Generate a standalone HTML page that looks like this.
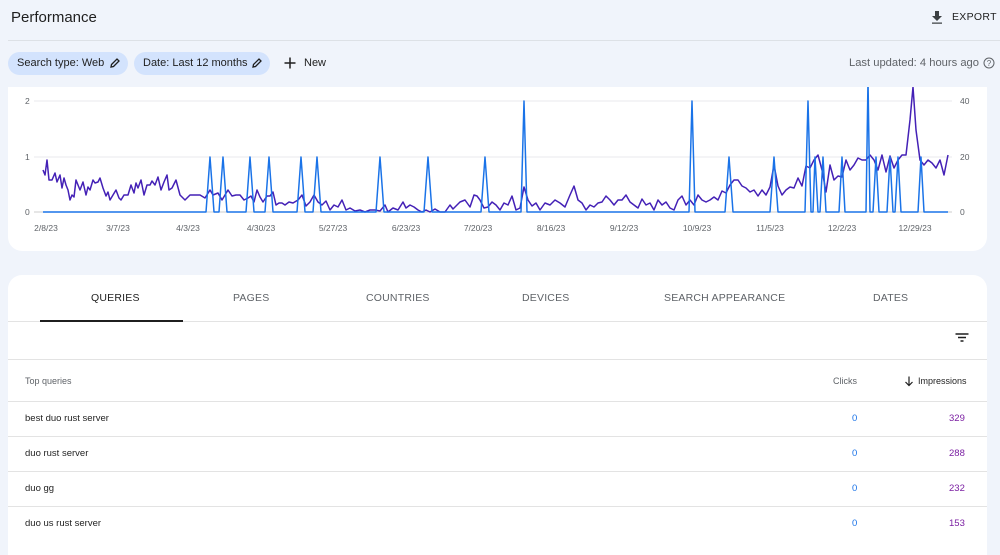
<!DOCTYPE html>
<html><head><meta charset="utf-8"><style>
body{margin:0;width:1000px;height:542px;background:#f0f4fb;font-family:"Liberation Sans",Arial,sans-serif;position:relative;overflow:hidden;color:#1f1f1f}
.a{position:absolute}
.chip{position:absolute;top:52px;height:23px;box-sizing:border-box;border-radius:12px;background:#d3e3fd;font-size:11px;line-height:23px;padding-left:9px;color:#1f1f1f}
.tab{position:absolute;top:292px;font-size:10.5px;color:#5f6368;letter-spacing:.2px}
.row{position:absolute;left:8px;width:979px;height:34px;border-top:1px solid #e3e3e3;font-size:9.5px}
.row span{position:absolute;top:11px}
</style></head><body>
<div class="a" style="left:11px;top:9px;font-size:15px;color:#1f1f1f">Performance</div>
<svg class="a" style="left:930px;top:10px" width="14" height="14" viewBox="0 0 14 14"><path d="M5 1h4v5h3L7 11 2 6h3z M2 12.5h10v1.3H2z" fill="#3c4043"/></svg>
<div class="a" style="left:952px;top:11px;font-size:10.5px;color:#1f1f1f;letter-spacing:.3px">EXPORT</div>
<div class="a" style="left:8px;top:40px;width:992px;height:1px;background:#dde1e6"></div>
<div class="chip" style="left:8px;width:120px">Search type: Web<svg class="a" style="left:102px;top:6px" width="10" height="10" viewBox="0 0 10 10"><path d="M1 9l.5-2.5L7 1l2 2-5.5 5.5z" fill="none" stroke="#1f1f1f" stroke-width="1.3"/></svg></div>
<div class="chip" style="left:134px;width:136px">Date: Last 12 months<svg class="a" style="left:118px;top:6px" width="10" height="10" viewBox="0 0 10 10"><path d="M1 9l.5-2.5L7 1l2 2-5.5 5.5z" fill="none" stroke="#1f1f1f" stroke-width="1.3"/></svg></div>
<svg class="a" style="left:284px;top:57px" width="12" height="12" viewBox="0 0 12 12"><path d="M6 0.5v11M0.5 6h11" stroke="#1f1f1f" stroke-width="1.5"/></svg>
<div class="a" style="left:304px;top:57px;font-size:11px">New</div>
<div class="a" style="right:21px;top:57px;font-size:11.2px;color:#5f6368;white-space:nowrap">Last updated: 4 hours ago</div>
<svg class="a" style="left:983px;top:57px" width="12" height="12" viewBox="0 0 12 12"><circle cx="6" cy="6" r="5" fill="none" stroke="#5f6368" stroke-width="1"/><text x="6" y="9" font-size="8" text-anchor="middle" fill="#5f6368" font-family="Liberation Sans">?</text></svg>
<div class="a" style="left:8px;top:87px;width:979px;height:164px;background:#fff;border-radius:0 0 14px 14px"></div>
<svg class="a" style="left:0;top:87px" width="1000" height="160" viewBox="0 87 1000 160">
<defs><clipPath id="c"><rect x="0" y="87" width="1000" height="200"/></clipPath></defs>
<g stroke="#e8eaed" stroke-width="1"><line x1="34" y1="101" x2="952" y2="101"/><line x1="34" y1="157" x2="952" y2="157"/><line x1="34" y1="212" x2="952" y2="212" stroke="#ccc"/></g>
<g font-size="8.5" fill="#5f6368" font-family="Liberation Sans"><text x="25" y="104">2</text><text x="25" y="160">1</text><text x="25" y="215">0</text>
<text x="960" y="104">40</text><text x="960" y="160">20</text><text x="960" y="215">0</text>
<g text-anchor="middle"><text x="46" y="231">2/8/23</text><text x="118" y="231">3/7/23</text><text x="188" y="231">4/3/23</text><text x="261" y="231">4/30/23</text><text x="333" y="231">5/27/23</text><text x="406" y="231">6/23/23</text><text x="478" y="231">7/20/23</text><text x="551" y="231">8/16/23</text><text x="624" y="231">9/12/23</text><text x="697" y="231">10/9/23</text><text x="770" y="231">11/5/23</text><text x="842" y="231">12/2/23</text><text x="915" y="231">12/29/23</text></g></g>
<g clip-path="url(#c)" fill="none" stroke-width="1.5" stroke-linejoin="round">
<polyline stroke="#4421b6" points="43,170 45,175 47,160 49,180 52,180 55,173 57,182 60,175 62,188 64,178 66,185 68,190 70,200 72,195 74,197 76,180 78,185 80,190 83,182 86,195 88,187 90,190 93,180 95,183 98,182 100,178 103,188 106,196 108,192 110,200 113,195 116,190 119,198 121,200 124,195 128,195 131,185 134,193 136,183 138,188 141,180 144,195 147,185 150,185 152,181 155,185 158,177 161,190 164,182 167,175 169,190 172,188 176,180 180,195 185,200 190,195 200,195 205,198 210,190 213,195 218,193 222,200 225,195 228,190 232,196 236,195 240,195 244,200 248,198 251,196 254,202 257,190 260,197 263,202 267,196 270,196 273,192 276,205 279,203 282,203 285,205 289,202 293,203 298,200 302,195 306,206 310,202 314,195 318,202 322,205 326,201 330,210 334,205 338,207 342,200 346,210 350,208 355,211 360,210 365,212 370,210 375,210 380,211 385,205 388,212 393,208 398,210 403,202 406,208 410,205 414,207 418,210 422,212 426,210 430,212 435,209 440,212 445,212 450,205 453,209 456,206 460,202 465,200 470,207 474,195 477,196 480,200 484,208 488,207 492,202 496,205 500,210 504,203 508,205 512,196 516,210 520,208 524,187 528,200 532,206 536,203 540,210 545,203 550,205 555,200 560,203 565,207 570,195 574,186 578,200 582,203 586,210 590,205 594,207 598,203 602,202 606,196 610,200 614,205 618,200 622,200 626,195 630,202 634,205 638,208 642,199 646,205 650,203 654,210 658,200 662,205 666,202 670,208 674,210 678,200 682,196 686,205 690,200 694,205 698,195 702,200 706,202 710,200 714,197 718,200 722,191 726,193 730,185 734,180 738,180 742,186 746,188 750,192 754,190 758,196 762,190 766,195 770,187 774,165 778,186 782,195 786,190 790,187 794,188 798,178 802,186 806,166 810,168 814,160 818,155 822,170 826,192 830,165 834,180 838,176 842,177 846,160 850,170 854,165 858,158 862,160 866,160 870,155 874,160 878,170 882,155 886,172 890,156 894,168 898,160 902,155 906,155 910,120 913,87 916,130 920,160 924,165 928,160 932,163 936,168 940,160 944,175 948,155"/>
<polyline stroke="#1a73e8" points="43,212 206,212 210,157 214,212 219,212 223,157 227,212 246,212 250,157 254,212 265,212 269,157 273,212 297,212 301,157 305,212 313,212 317,157 321,212 376,212 380,157 384,212 424,212 428,157 432,212 481,212 485,157 489,212 521,212 524,101 527,212 689,212 692,101 695,212 725,212 729,157 733,212 770,212 774,157 778,212 805,212 808,101 811,212 813,212 815,157 818,212 820,212 823,157 826,212 839,212 842,157 845,212 866,212 868,80 870,212 873,212 876,157 879,212 887,212 890,157 893,212 895,212 898,157 901,212 918,212 921,157 924,212 948,212"/>
</g></svg>
<div class="a" style="left:8px;top:275px;width:979px;height:280px;background:#fff;border-radius:14px 14px 0 0"></div>
<div class="tab" style="left:91px;color:#1f1f1f">QUERIES</div>
<div class="tab" style="left:233px">PAGES</div>
<div class="tab" style="left:366px">COUNTRIES</div>
<div class="tab" style="left:522px">DEVICES</div>
<div class="tab" style="left:664px">SEARCH APPEARANCE</div>
<div class="tab" style="left:873px">DATES</div>
<div class="a" style="left:8px;top:321px;width:979px;height:1px;background:#e3e3e3"></div>
<div class="a" style="left:40px;top:320px;width:143px;height:2px;background:#1f1f1f"></div>
<svg class="a" style="left:955px;top:333px" width="14" height="10" viewBox="0 0 14 10"><path d="M0.5 1h13M3 4.5h8M5.5 8h3" stroke="#1f1f1f" stroke-width="1.4"/></svg>
<div class="row" style="top:359px;height:42px"><span style="left:17px;top:16px;font-size:9px;color:#5f6368">Top queries</span><span style="left:825px;top:16px;font-size:9px;color:#5f6368">Clicks</span><svg class="a" style="left:896px;top:16px" width="10" height="11" viewBox="0 0 10 11"><path d="M5 0.5v9M1.5 6L5 9.5 8.5 6" fill="none" stroke="#1f1f1f" stroke-width="1.2"/></svg><span style="left:910px;top:16px;font-size:9px">Impressions</span></div>
<div class="row" style="top:401px"><span style="left:17px">best duo rust server</span><span style="left:844px;color:#1a73e8">0</span><span style="left:941px;color:#7b1fa2">329</span></div>
<div class="row" style="top:436px"><span style="left:17px">duo rust server</span><span style="left:844px;color:#1a73e8">0</span><span style="left:941px;color:#7b1fa2">288</span></div>
<div class="row" style="top:471px"><span style="left:17px">duo gg</span><span style="left:844px;color:#1a73e8">0</span><span style="left:941px;color:#7b1fa2">232</span></div>
<div class="row" style="top:506px"><span style="left:17px">duo us rust server</span><span style="left:844px;color:#1a73e8">0</span><span style="left:941px;color:#7b1fa2">153</span></div>
</body></html>
